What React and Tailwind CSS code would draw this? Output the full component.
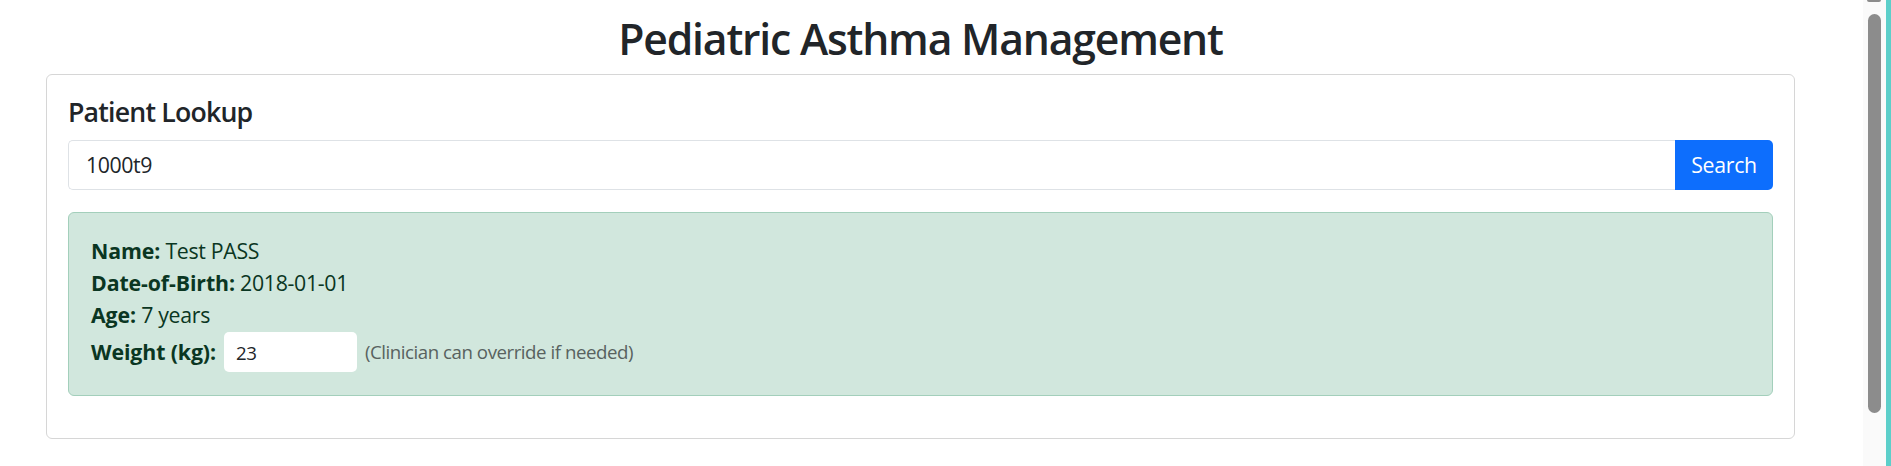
export default function App() {
  return (
    <div className="flex h-[466px] w-[1891px] overflow-hidden bg-white font-['Open_Sans',sans-serif] tracking-[-0.02em] text-[#212529]">
      <main className="w-[1863px] shrink-0">
        <div className="ml-[46px] w-[1749px]">
          <h2 className="mt-[13px] mb-[10px] text-center text-[42.7px] leading-[51px] font-semibold tracking-[-0.028em]">
            Pediatric Asthma Management
          </h2>

          {/* Patient lookup card */}
          <section className="rounded-[6px] border border-[#d6d6d6] px-[21px] pt-[21px] pb-[42px]">
            <h5 className="text-[26.7px] leading-[32px] font-semibold tracking-[-0.03em]">Patient Lookup</h5>

            <div className="mt-[12px] flex h-[50px]">
              <input
                defaultValue="1000t9"
                className="min-w-0 flex-1 rounded-l-[5px] border border-r-0 border-[#dee2e6] bg-white px-[17px] text-[21.3px] tracking-[-0.02em] text-[#212529] outline-none"
              />
              <button className="w-[98px] rounded-r-[5px] bg-[#0d6efd] text-[21.3px] text-white">
                Search
              </button>
            </div>

            <div className="mt-[22px] rounded-[6px] border border-[#a3cfbb] bg-[#d1e7dd] px-[22px] py-[21px] text-[21.3px] leading-[32px] text-[#0a3622]">
              <p className="pt-[1px]">
                <strong className="tracking-[-0.005em]">Name:</strong> Test PASS
              </p>
              <p>
                <strong className="tracking-[-0.005em]">Date-of-Birth:</strong> 2018-01-01
              </p>
              <p>
                <strong className="tracking-[-0.005em]">Age:</strong> 7 years
              </p>
              <div className="-mt-[1px] flex h-[44px] items-center">
                <strong className="tracking-[-0.005em]">Weight (kg):</strong>
                <input
                  defaultValue="23"
                  className="ml-[8px] h-[40px] w-[133px] rounded-[5px] bg-white px-[12px] text-[18.7px] tracking-[-0.02em] text-[#212529] outline-none"
                />
                <span className="ml-[8px] text-[18.7px] tracking-[-0.025em] text-[#58625f]">
                  (Clinician can override if needed)
                </span>
              </div>
            </div>
          </section>
        </div>
      </main>

      {/* scrollbar */}
      <div className="flex w-[23px] shrink-0 flex-col bg-[#fafafa] pl-[5px]">
        <div className="ml-[-1px] h-[2px] w-[14px] rounded-b-[2px] bg-[#8c8c8c]" />
        <div className="mt-[12px] h-[399px] w-[13px] rounded-full bg-[#8c8c8c]" />
      </div>
      <div className="w-[5px] shrink-0 bg-[#5ccfca]" />
    </div>
  );
}
